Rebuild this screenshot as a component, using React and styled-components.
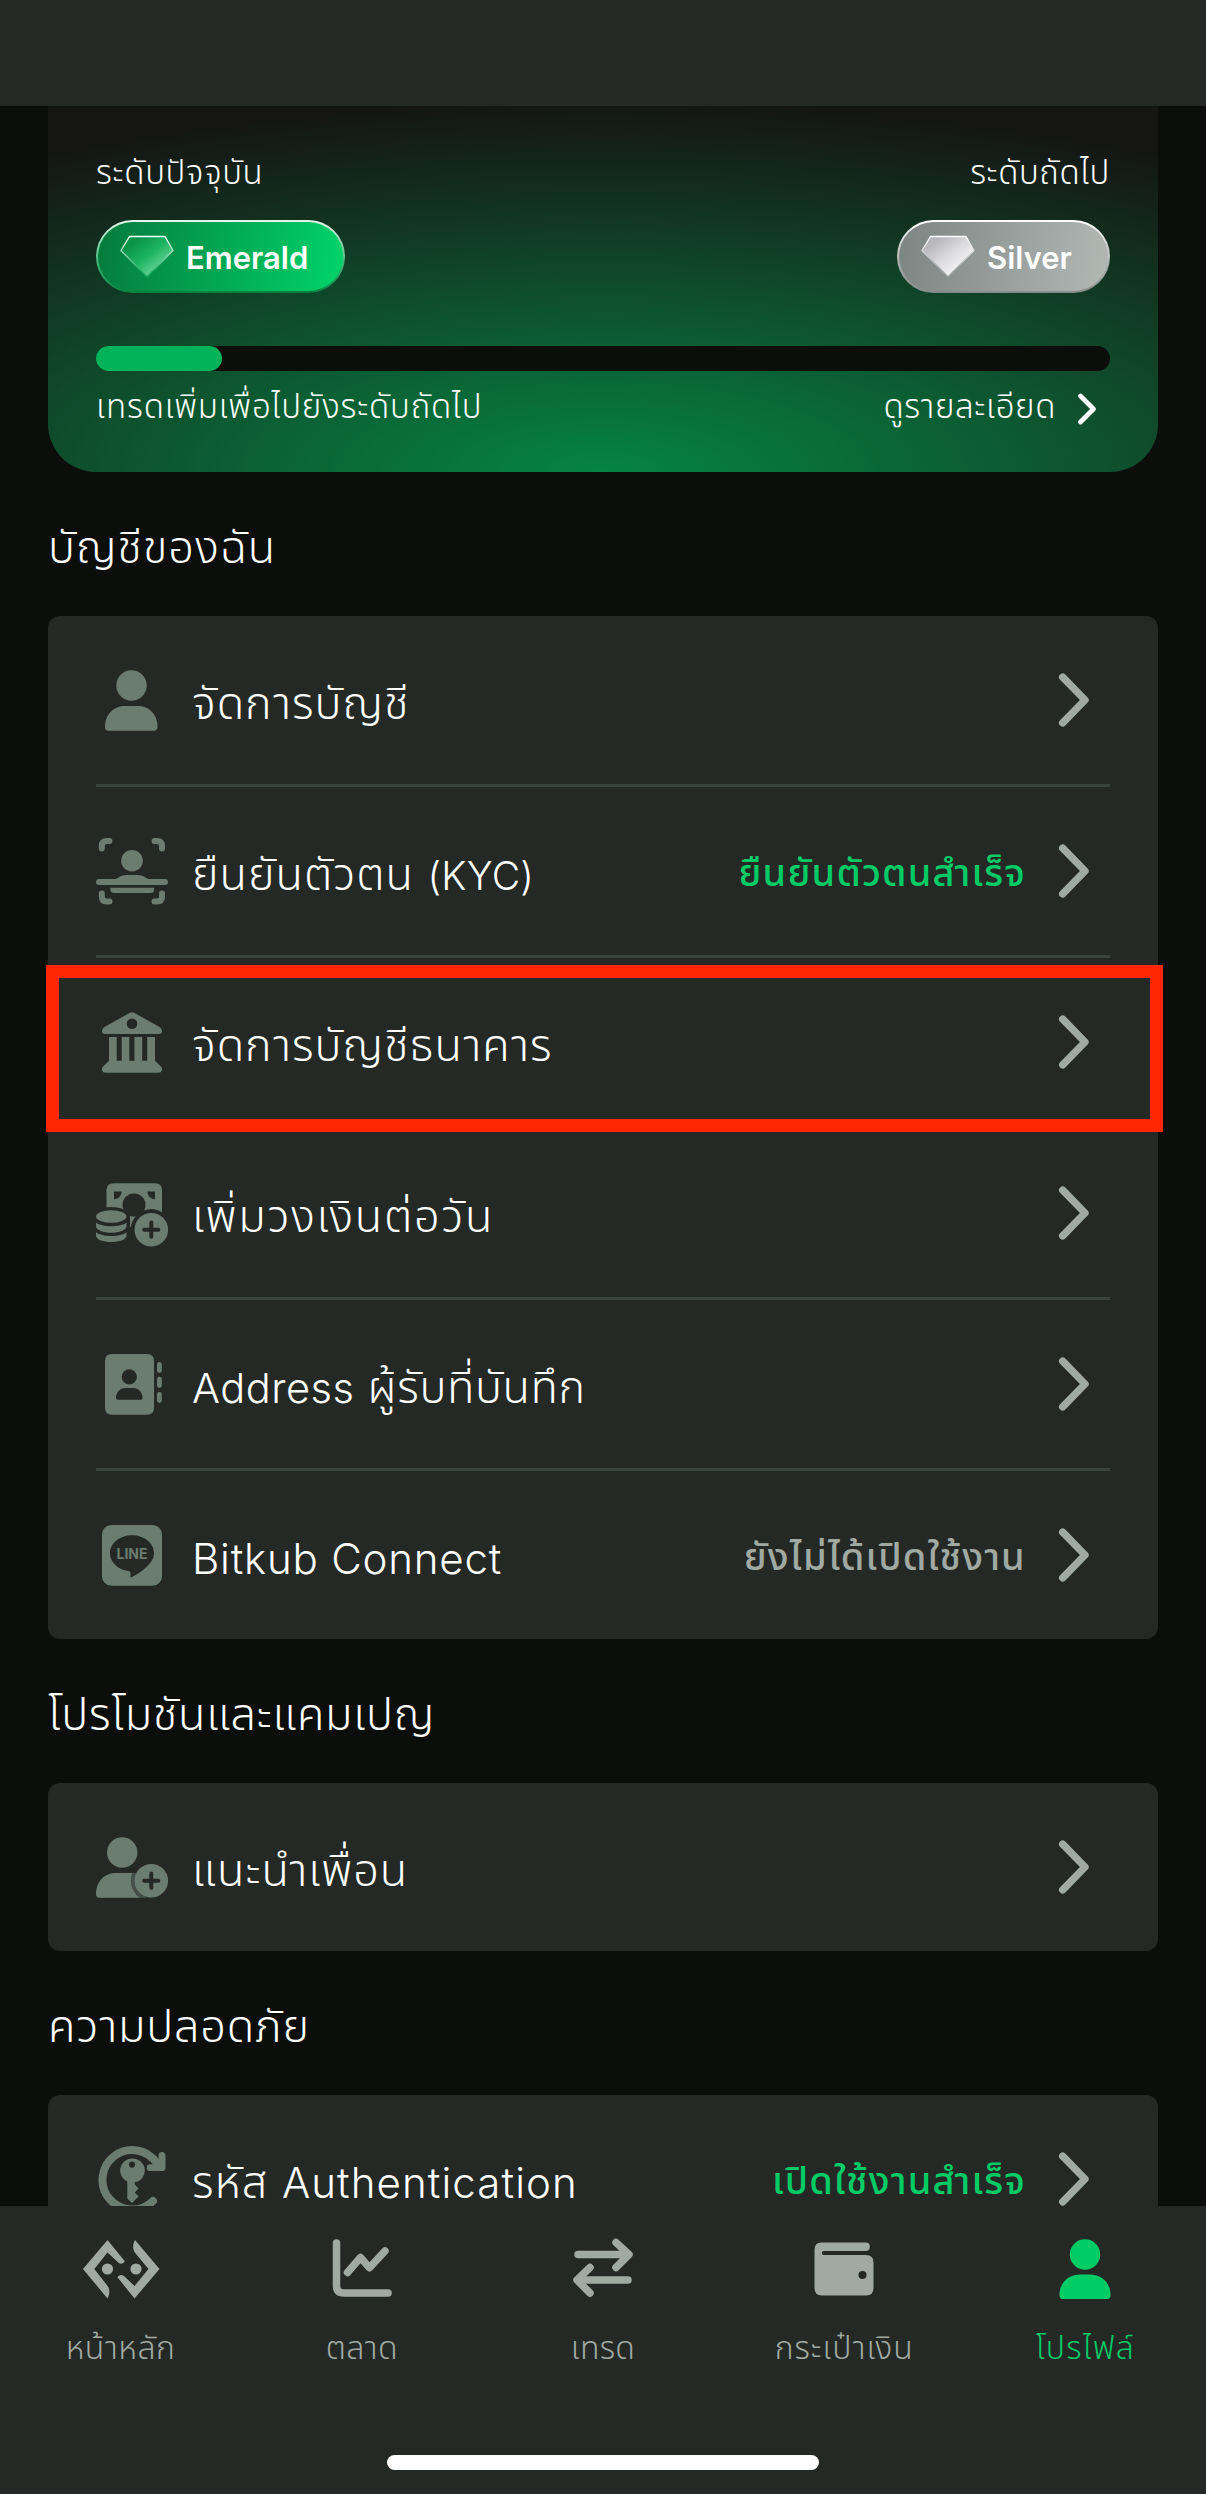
import React from "react";
import styled, { createGlobalStyle } from "styled-components";

const color = {
  page: "#0b0e0b",
  panel: "#252926",
  divider: "#3a433d",
  icon: "#6b7c70",
  muted: "#a0aaa3",
  green: "#00cc66",
  highlight: "#ff2600",
};

const GlobalStyle = createGlobalStyle`
  * { box-sizing: border-box; }
  body {
    margin: 0;
    background: ${color.page};
    color: #fff;
    font-family: Inter, "Noto Sans Thai", "Noto Sans", sans-serif;
    font-weight: 300;
  }
`;

const Screen = styled.div`
  width: 1206px;
  height: 2494px;
  display: flex;
  flex-direction: column;
  overflow: hidden;
  background: ${color.page};
`;

const StatusBar = styled.header`
  flex: none;
  height: 106px;
  background: ${color.panel};
`;

const Content = styled.main`
  flex: none;
  height: 2100px;
  padding: 0 48px;
  overflow: hidden;
`;

const Text = styled.span`
  display: block;
  white-space: nowrap;
  line-height: 1.2;
  font-size: ${(p) => p.$size}px;
  letter-spacing: ${(p) => p.$track || 0}px;
  font-weight: ${(p) => p.$weight || 300};
`;

const Latin = styled.span`
  font-size: ${(p) => p.$size || 42}px;
  letter-spacing: ${(p) => p.$track || 0.8}px;
`;

const LevelCard = styled.section`
  display: flex;
  flex-direction: column;
  height: 366px;
  padding: 39px 48px 0;
  border-radius: 0 0 48px 48px;
  background: radial-gradient(
    ellipse 1110px 372px at 50% 100%,
    #058443 0%,
    #0f4c2c 50%,
    #12301f 74%,
    #151514 100%
  );
`;

const Between = styled.div`
  display: flex;
  justify-content: space-between;
  align-items: center;
  height: ${(p) => p.$height}px;
`;

const Caption = styled(Text)`
  padding-bottom: 3px;
`;

const Pill = styled.div`
  display: flex;
  align-items: center;
  gap: 12px;
  width: ${(p) => p.$width}px;
  height: 73px;
  padding-left: 22px;
  border: 2px solid transparent;
  border-radius: 37px;
  background: ${(p) => p.$fill} padding-box, ${(p) => p.$edge} border-box;
`;

const PillLabel = styled(Text)`
  padding-top: 3px;
`;

const Track = styled.div`
  height: 25px;
  margin-top: 34px;
  border-radius: 13px;
  background: ${color.page};
`;

const Fill = styled.div`
  width: 126px;
  height: 25px;
  border-radius: 13px;
  background: #02b35a;
`;

const Details = styled.div`
  display: flex;
  align-items: center;
  gap: 20px;
  padding-right: 10px;
`;

const Heading = styled.h2`
  display: flex;
  align-items: center;
  height: 144px;
  margin: 0;
  padding: 5px 0 0 0;
  font-weight: 300;
`;

const Panel = styled.section`
  border-radius: 12px;
  background: ${color.panel};
`;

const Row = styled.div`
  position: relative;
  display: flex;
  align-items: center;
  height: 168px;
  margin: 0 48px;
  & + & {
    height: 171px;
    border-top: 3px solid ${color.divider};
  }
`;

const Label = styled(Text)`
  flex: 1;
  padding: 5px 0 0 24px;
`;

const State = styled(Text)`
  color: ${(p) => p.$color};
  padding: 4px 30px 0 0;
`;

const ChevronBox = styled.div`
  display: flex;
  width: 36px;
  margin-right: 18px;
`;

const Highlight = styled.div`
  position: absolute;
  z-index: 1;
  inset: 7px -53px -6px -50px;
  border: 13px solid ${color.highlight};
`;

const TabBar = styled.nav`
  flex: 1;
  display: flex;
  flex-direction: column;
  align-items: center;
  background: ${color.panel};
`;

const Tabs = styled.div`
  display: grid;
  grid-template-columns: repeat(5, 1fr);
  width: 100%;
  padding-top: 27px;
`;

const Tab = styled.div`
  display: flex;
  flex-direction: column;
  align-items: center;
  gap: 17px;
  color: ${(p) => (p.$active ? color.green : color.muted)};
`;

const TabLabel = styled(Text)`
  line-height: 51px;
`;

const HomeIndicator = styled.div`
  width: 432px;
  height: 15px;
  margin-top: 82px;
  border-radius: 8px;
  background: #fff;
`;

const Svg = styled.svg`
  flex: none;
  display: block;
  width: ${(p) => p.$w || 72}px;
  height: ${(p) => p.$h || 72}px;
`;

const Chevron = () => (
  <ChevronBox>
    <Svg $w={36} $h={60} viewBox="0 0 36 60" fill="none" stroke={color.muted} strokeWidth="7.4" strokeLinecap="round" strokeLinejoin="round">
      <path d="M6.7 7.2 29 30 6.7 52.8" />
    </Svg>
  </ChevronBox>
);

const Gem = ({ id, from, mid, to, edge }) => (
  <Svg $w={54} $h={44} viewBox="0 0 54 44">
    <defs>
      <linearGradient id={id} x1="0" y1="0" x2="1" y2="1">
        <stop offset="0.2" stopColor={from} />
        <stop offset="0.5" stopColor={mid} />
        <stop offset="0.8" stopColor={to} />
      </linearGradient>
      <linearGradient id={id + "e"} x1="0" y1="0" x2="0" y2="1">
        <stop offset="0" stopColor="#fff" />
        <stop offset="0.9" stopColor={edge} />
      </linearGradient>
    </defs>
    <path d="M9.5 1.5H45L53 15.5 27 42 1 15.5Z" fill={`url(#${id})`} stroke={`url(#${id}e)`} strokeWidth="1.4" strokeLinejoin="round" />
  </Svg>
);

const UserIcon = () => (
  <Svg viewBox="0 0 72 72" fill={color.icon}>
    <circle cx="35.5" cy="21.5" r="15.2" />
    <path d="M9 63C9 50 18 42 29 42H42C53 42 61.5 50 61.5 63Q61.5 66.7 58 66.7H12.5Q9 66.7 9 63Z" />
  </Svg>
);

const KycIcon = () => (
  <Svg viewBox="0 0 72 72" fill={color.icon}>
    <g fill="none" stroke={color.icon} strokeWidth="6" strokeLinecap="round">
      <path d="M5.8 13.5V11Q5.8 6 10.8 6H13.5M58.5 6H61Q66 6 66 11V13.5M66 58.5V61.5Q66 66.5 61 66.5H58.5M13.5 66.5H10.8Q5.8 66.5 5.8 61.5V58.5" />
      <path d="M3 47H69" />
    </g>
    <circle cx="36" cy="25.7" r="10.8" />
    <path d="M18 45.5C22 42 26 40 31 40H41C46 40 50 42 54 45.5Z" />
    <path d="M14.5 52.7H58V54.5Q58 58 54.5 58H18Q14.5 58 14.5 54.5Z" />
  </Svg>
);

const BankIcon = () => (
  <Svg viewBox="0 0 72 72" fill={color.icon}>
    <path fillRule="evenodd" d="M33.5 7Q36 5.6 38.5 7L63.5 21Q66 22.5 66 25Q66 28 63 28H9Q6 28 6 25Q6 22.5 8.5 21ZM36 12.4A5.3 5.3 0 1 0 36 23A5.3 5.3 0 1 0 36 12.4Z" />
    <path d="M13 31H20.7V54.7H25.7V31H33.3V54.7H38.5V31H46.2V54.7H51.2V31H59V54.7L65.2 60.8Q66 61.7 66 63Q66 66.7 62.5 66.7H9.5Q6 66.7 6 63Q6 61.7 6.8 60.8L13 54.7Z" />
  </Svg>
);

const PlusBadge = ({ cy }) => (
  <>
    <circle cx="55.3" cy={cy} r="16.8" fill={color.icon} />
    <path d={`M48.2 ${cy}H62.4M55.3 ${cy - 7.1}V${cy + 7.1}`} stroke={color.panel} strokeWidth="4" strokeLinecap="round" />
  </>
);

const MoneyIcon = () => (
  <Svg viewBox="0 0 72 72" fill={color.icon}>
    <mask id="bill" maskUnits="userSpaceOnUse" x="0" y="0" width="72" height="72">
      <rect width="72" height="72" fill="#fff" />
      <g fill="#000">
        <path d="M18 14.5H25.7A7.7 7.7 0 0 1 18 22.2ZM59 14.5H51.3A7.7 7.7 0 0 0 59 22.2Z" />
        <circle cx="38" cy="28" r="11.5" />
        <circle cx="55.3" cy="52.7" r="20.6" />
        <ellipse cx="15" cy="39.5" rx="19" ry="9.6" />
        <rect x="0" y="39.5" width="34" height="33" />
      </g>
    </mask>
    <path mask="url(#bill)" d="M17.5 6.3H59Q66 6.3 66 13.3V50H10.5V13.3Q10.5 6.3 17.5 6.3Z" />
    <ellipse cx="15.2" cy="39.5" rx="15.2" ry="6.3" />
    <path d="M0 45.5C6 50.5 24.5 50.5 30.5 45.5V49C30.5 58 0 58 0 49ZM0 55.2C6 60.2 24.5 60.2 30.5 55.2V58.5C30.5 67.2 0 67.2 0 58.5Z" />
    <PlusBadge cy={52.7} />
  </Svg>
);

const AddressIcon = () => (
  <Svg viewBox="0 0 72 72" fill={color.icon}>
    <path fillRule="evenodd" d="M16 6H51Q58 6 58 13V59.7Q58 66.7 51 66.7H16Q9 66.7 9 59.7V13Q9 6 16 6ZM33.3 21.3A7.6 7.6 0 1 0 33.3 36.5A7.6 7.6 0 1 0 33.3 21.3ZM20 50Q20 51.7 21.8 51.7H44.8Q46.6 51.7 46.6 50C46.6 44 42 40 37.5 40H29C24.5 40 20 44 20 50Z" />
    <rect x="61" y="14" width="4.8" height="11" rx="2.4" />
    <rect x="61" y="28.8" width="4.8" height="11.2" rx="2.4" />
    <rect x="61" y="44" width="4.8" height="11" rx="2.4" />
  </Svg>
);

const LineIcon = () => (
  <Svg viewBox="0 0 72 72" fill={color.icon}>
    <rect x="6" y="6" width="60" height="60.7" rx="9.5" />
    <path fill={color.panel} d="M36 16.3C23.8 16.3 14 24.3 14 34.2C14 43.2 22 50.6 32.5 51.9C34.5 52.3 34.8 53.2 34.3 57.6Q34.4 58.8 36 58C43 54.5 50.5 48.8 54.5 43.5C57 40.3 58 37.4 58 34.2C58 24.3 48.2 16.3 36 16.3Z" />
    <text x="36" y="39.6" textAnchor="middle" fontFamily="Inter, sans-serif" fontWeight="700" fontSize="14" textLength="31" lengthAdjust="spacingAndGlyphs">LINE</text>
  </Svg>
);

const UserPlusIcon = () => (
  <Svg viewBox="0 0 72 72" fill={color.icon}>
    <mask id="user" maskUnits="userSpaceOnUse" x="0" y="0" width="72" height="72">
      <rect width="72" height="72" fill="#fff" />
      <circle cx="55.3" cy="49.7" r="20.5" />
    </mask>
    <circle cx="26.2" cy="21.5" r="15.2" />
    <path mask="url(#user)" d="M0 63C0 50 9 42 20 42H50V66.7H3.5Q0 66.7 0 63Z" />
    <PlusBadge cy={49.7} />
  </Svg>
);

const AuthIcon = () => (
  <Svg viewBox="0 0 72 72" fill={color.icon}>
    <path d="M57 58A29.700 29.700 0 1 1 61 20.500" fill="none" stroke={color.icon} strokeWidth="8" strokeLinecap="round" />
    <path d="M62.5 12.5Q62.5 9 66 9Q69.5 9 69.5 12.5V25Q69.5 28 66.5 28H54Q50.8 28 50.8 24.7Q50.8 21.3 54 21.3H57.5L54 17L58.5 13.5L62.5 17.5Z" />
    <path fillRule="evenodd" d="M36 15.5A12 12 0 0 0 31.3 38.5V55.5L36 60L42.5 53.5L38.8 49.5L42.5 45.5L38.8 41.5V39.3A12 12 0 0 0 36 15.5ZM36 18.5A3.1 3.1 0 1 0 36 24.7A3.1 3.1 0 1 0 36 18.5Z" />
  </Svg>
);

const HomeIcon = () => (
  <Svg $w={80} viewBox="0 0 80 72" fill="currentColor">
    <path d="M26.5 7 43.8 28.3C41.8 31.6 38.5 31.2 36.5 28.8L26.5 19.5 13.3 36 26 52.2C29 56 29 60.5 26.5 65.5L2 36Z" />
    <path d="M53.5 65.5 36.5 44.3C38.5 41 42 41.6 44 44L53.5 53 67.5 36 54 19.8C51.5 16 51.5 12 54 7L78.5 36Z" />
    <circle cx="26.5" cy="36" r="5.6" />
    <circle cx="55" cy="36" r="5.6" />
  </Svg>
);

const ChartIcon = () => (
  <Svg viewBox="0 0 72 72" fill="none" stroke="currentColor" strokeWidth="7.5" strokeLinecap="round" strokeLinejoin="round">
    <path d="M10.5 10V52.5Q10.5 60 17.5 60H62" />
    <path d="M21.5 39.5 34.5 24.5 43.5 34.7 59 18" />
  </Svg>
);

const TradeIcon = () => (
  <Svg viewBox="0 0 72 72" fill="none" stroke="currentColor" strokeWidth="7.5" strokeLinecap="round" strokeLinejoin="round">
    <path d="M11 21.5H61M49 9.5 62 21.5 49 34.5M61 47H11M23 34.5 10 47 23 60" />
  </Svg>
);

const WalletIcon = () => (
  <Svg viewBox="0 0 72 72" fill="currentColor">
    <path fillRule="evenodd" d="M13.5 9.5H57.5Q61.8 9.5 61.8 13.7Q61.8 18 57.5 18H16Q13.8 18 13.8 20Q13.8 22 16 22H58Q65.5 22 65.5 29.5V55Q65.5 62.5 58 62.5H14Q6.5 62.5 6.5 55V16.5Q6.5 9.5 13.5 9.5ZM54.5 38A4 4 0 1 0 54.5 46A4 4 0 1 0 54.5 38Z" />
  </Svg>
);

const ProfileIcon = () => (
  <Svg viewBox="0 0 72 72" fill="currentColor">
    <circle cx="36" cy="21.5" r="15.2" />
    <path d="M10.5 62C10.5 49 20 41.5 31 41.5H41C52 41.5 61.5 49 61.5 62Q61.5 66 58.5 66H13.5Q10.5 66 10.5 62Z" />
  </Svg>
);

const TABS = [
  { label: "หน้าหลัก", track: 0.5, Icon: HomeIcon },
  { label: "ตลาด", track: 0.3, Icon: ChartIcon },
  { label: "เทรด", track: 0.3, Icon: TradeIcon },
  { label: "กระเป๋าเงิน", track: 1, Icon: WalletIcon },
  { label: "โปรไฟล์", track: 1.3, Icon: ProfileIcon, active: true },
];

const ACCOUNT = [
  { Icon: UserIcon, label: "จัดการบัญชี" },
  {
    Icon: KycIcon,
    label: <>ยืนยันตัวตน <Latin $size={39} $track={0.2}>(KYC)</Latin></>,
    state: "ยืนยันตัวตนสำเร็จ",
    tone: color.green,
  },
  { Icon: BankIcon, label: "จัดการบัญชีธนาคาร", highlighted: true },
  { Icon: MoneyIcon, label: "เพิ่มวงเงินต่อวัน", track: 1.7 },
  { Icon: AddressIcon, label: <><Latin $size={41.5} $track={0.5}>Address</Latin> ผู้รับที่บันทึก</>, track: 0.6 },
  { Icon: LineIcon, label: <Latin>Bitkub Connect</Latin>, state: "ยังไม่ได้เปิดใช้งาน", tone: color.muted },
];

const MenuRow = ({ Icon, label, track = 1, state, tone, highlighted }) => (
  <Row>
    <Icon />
    <Label $size={45} $track={track}>{label}</Label>
    {state && <State $size={38} $track={1.2} $weight={500} $color={tone}>{state}</State>}
    <Chevron />
    {highlighted && <Highlight />}
  </Row>
);

export default function App() {
  return (
    <Screen>
      <GlobalStyle />
      <StatusBar />
      <Content>
        <LevelCard>
          <Between $height={56}>
            <Text $size={33} $track={0.7}>ระดับปัจจุบัน</Text>
            <Text $size={33} $track={0.6}>ระดับถัดไป</Text>
          </Between>
          <Between $height={111}>
            <Pill $width={249} $fill="linear-gradient(100deg, #057a3c, #01d46b)" $edge="linear-gradient(#e6f5ec, #3cb878 60%, #06803f)">
              <Gem id="emerald" from="#0a9449" mid="#1db562" to="#6fd39b" edge="#12a857" />
              <PillLabel $size={31} $weight={600}>Emerald</PillLabel>
            </Pill>
            <Pill $width={213} $fill="linear-gradient(100deg, #7b8582, #b3b8b5)" $edge="linear-gradient(#fff, #b9bdbc 50%, #858b89)">
              <Gem id="silver" from="#b9b9bd" mid="#dcdcde" to="#f6f6f7" edge="#9a9c9c" />
              <PillLabel $size={31} $weight={600}>Silver</PillLabel>
            </Pill>
          </Between>
          <Track>
            <Fill />
          </Track>
          <Between $height={75}>
            <Caption $size={33} $track={0.85}>เทรดเพิ่มเพื่อไปยังระดับถัดไป</Caption>
            <Details>
              <Caption $size={33} $track={0.65}>ดูรายละเอียด</Caption>
              <Svg $w={24} $h={36} viewBox="0 0 24 36" fill="none" stroke="#fff" strokeWidth="4.8" strokeLinecap="round" strokeLinejoin="round">
                <path d="M4.5 5 17.5 18 4.5 31" />
              </Svg>
            </Details>
          </Between>
        </LevelCard>
        <Heading>
          <Text $size={45} $track={1}>บัญชีของฉัน</Text>
        </Heading>
        <Panel>
          {ACCOUNT.map((item, i) => (
            <MenuRow key={i} {...item} />
          ))}
        </Panel>
        <Heading>
          <Text $size={45} $track={0.7}>โปรโมชันและแคมเปญ</Text>
        </Heading>
        <Panel>
          <MenuRow Icon={UserPlusIcon} label="แนะนำเพื่อน" />
        </Panel>
        <Heading>
          <Text $size={45} $track={0.8}>ความปลอดภัย</Text>
        </Heading>
        <Panel>
          <MenuRow
            Icon={AuthIcon}
            label={<>รหัส <Latin $track={1.1}>Authentication</Latin></>}
            state="เปิดใช้งานสำเร็จ"
            tone={color.green}
          />
        </Panel>
      </Content>
      <TabBar>
        <Tabs>
          {TABS.map(({ label, track, Icon, active }) => (
            <Tab key={label} $active={active}>
              <Icon />
              <TabLabel $size={32} $track={track}>{label}</TabLabel>
            </Tab>
          ))}
        </Tabs>
        <HomeIndicator />
      </TabBar>
    </Screen>
  );
}
